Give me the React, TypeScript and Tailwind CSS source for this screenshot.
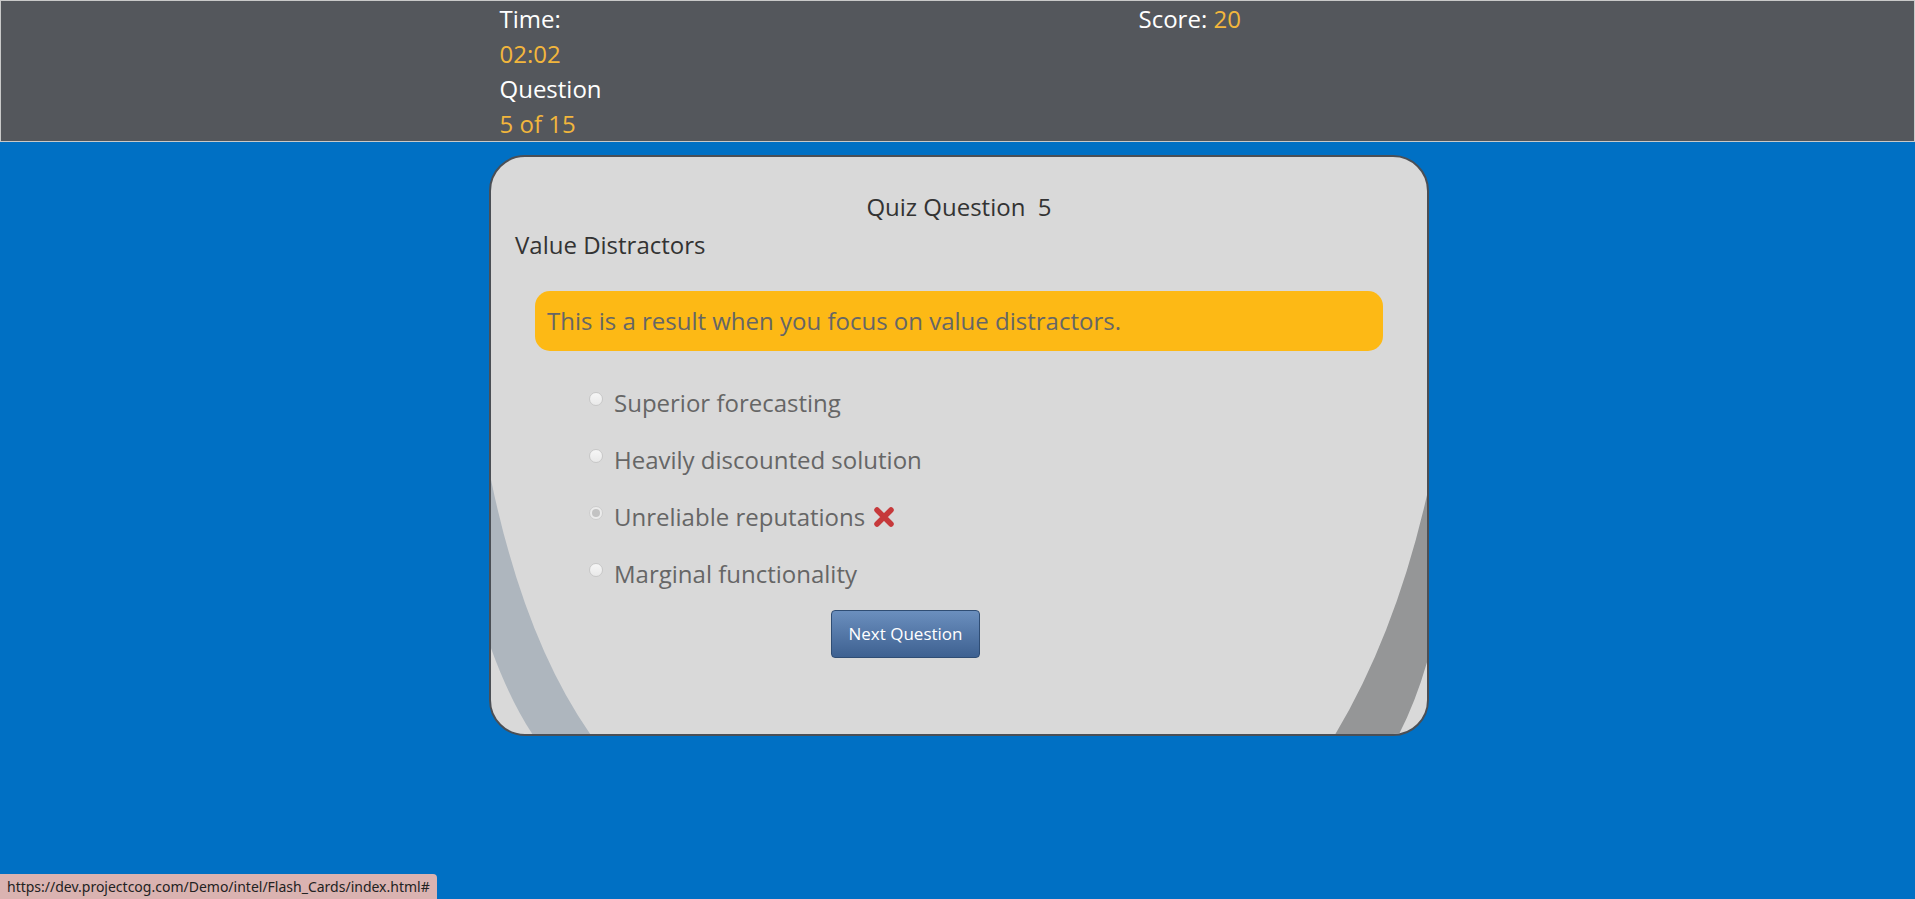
import React from "react";

const options = [
  { label: "Superior forecasting", selected: false, wrong: false },
  { label: "Heavily discounted solution", selected: false, wrong: false },
  { label: "Unreliable reputations", selected: true, wrong: true },
  { label: "Marginal functionality", selected: false, wrong: false },
];

function Radio({ selected }: { selected: boolean }) {
  return (
    <span
      className={
        "mt-[6px] block h-[14px] w-[14px] shrink-0 rounded-full border " +
        (selected
          ? "border-[#cdcdcd] bg-[#ebebeb] p-[2px]"
          : "border-[#c8c8c8] bg-gradient-to-b from-[#f6f6f6] to-[#e9e9e9]")
      }
    >
      {selected && <span className="block h-full w-full rounded-full bg-[#c3c3c3]" />}
    </span>
  );
}

function WrongMark() {
  return (
    <svg width="22" height="22" viewBox="0 0 22 22" className="ml-[8px] inline-block">
      <path d="M4 4 L18 18 M18 4 L4 18" stroke="#c6393b" strokeWidth="5.5" strokeLinecap="round" />
    </svg>
  );
}

export default function App() {
  return (
    <div
      className="relative min-h-[899px] w-full bg-[#0070c4]"
      style={{ fontFamily: '"Open Sans", "Noto Sans", sans-serif' }}
    >
      <header className="border border-[#c9c9c9] bg-[#54575c]">
        <div className="mx-auto flex w-[940px] text-[24px] leading-[35px]">
          <div className="w-[651px] pl-[12px]">
            <div className="text-white">Time:</div>
            <div className="text-[#f2b63c]">02:02</div>
            <div className="text-white">Question</div>
            <div className="text-[#f2b63c]">5 of 15</div>
          </div>
          <div>
            <span className="text-white">Score: </span>
            <span className="text-[#f2b63c]">20</span>
          </div>
        </div>
      </header>

      <div className="mt-[13px] flex justify-center pl-[3px]">
        <div className="relative h-[581px] w-[940px] overflow-hidden rounded-[36px] border-2 border-[#4b4f55] bg-[#d9d9d9]">
          <svg
            className="absolute inset-0 h-full w-full"
            viewBox="0 0 936 577"
            preserveAspectRatio="none"
          >
            <path d="M-6 292 Q 28 478 102 581 L 44 581 Q 16 540 -6 474 Z" fill="#aeb6be" />
            <path d="M944 300 Q 912 466 842 581 L 906 581 Q 930 536 944 474 Z" fill="#959697" />
          </svg>

          <div className="relative flex flex-col pt-[33px] text-[24px] leading-[34px]">
            <div className="whitespace-pre text-center text-[#333]">Quiz Question  5</div>
            <div className="mt-[4px] pl-[24px] text-[#333]">Value Distractors</div>

            <div className="mx-[44px] mt-[29px] rounded-[15px] bg-[#fdb915] px-[12px] py-[13px] text-[#666]">
              This is a result when you focus on value distractors.
            </div>

            <div className="ml-[98px] mt-[35px] flex flex-col gap-[23px]">
              {options.map((o) => (
                <label key={o.label} className="flex items-start gap-[11px] text-[#666]">
                  <Radio selected={o.selected} />
                  <span className="flex items-center">
                    {o.label}
                    {o.wrong && <WrongMark />}
                  </span>
                </label>
              ))}
            </div>

            <div className="mt-[19px] pl-[340px]">
              <button className="h-[48px] w-[149px] rounded-[4px] border border-[#2f4d74] bg-gradient-to-b from-[#6b8fbe] to-[#3e6191] text-[17px] text-white">
                Next Question
              </button>
            </div>
          </div>
        </div>
      </div>

      <div
        className="absolute bottom-0 left-0 rounded-tr-[4px] bg-[#dab3b1] px-[7px] text-[14px] leading-[25px] text-[#222]"
        style={{ fontFamily: '"Noto Sans", sans-serif' }}
      >
        https://dev.projectcog.com/Demo/intel/Flash_Cards/index.html#
      </div>
    </div>
  );
}
